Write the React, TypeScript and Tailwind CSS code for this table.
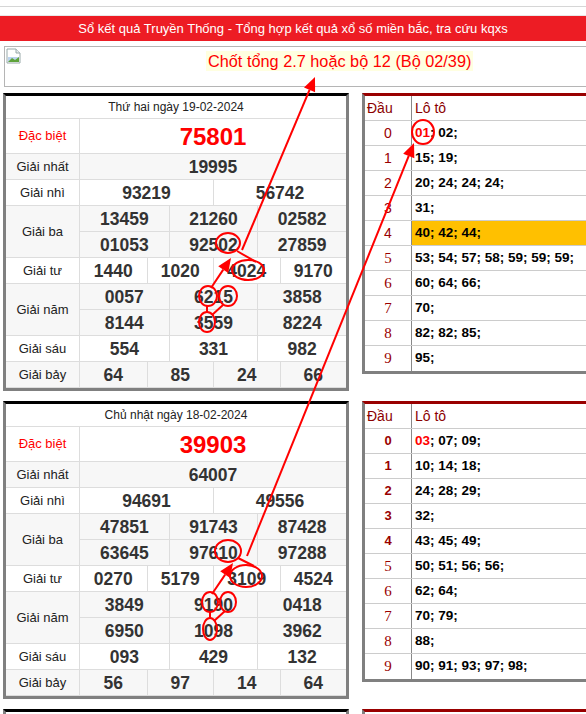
import React from "react";

type Prize = { label: string; lines: string[][]; special?: boolean; shade?: boolean };

const span: Record<number, string> = {
  1: "col-span-12",
  2: "col-span-6",
  3: "col-span-4",
  4: "col-span-3",
};

const day1: Prize[] = [
  { label: "Đặc biệt", lines: [["75801"]], special: true },
  { label: "Giải nhất", lines: [["19995"]], shade: true },
  { label: "Giải nhì", lines: [["93219", "56742"]] },
  { label: "Giải ba", lines: [["13459", "21260", "02582"], ["01053", "92502", "27859"]], shade: true },
  { label: "Giải tư", lines: [["1440", "1020", "4024", "9170"]] },
  { label: "Giải năm", lines: [["0057", "6215", "3858"], ["8144", "3559", "8224"]], shade: true },
  { label: "Giải sáu", lines: [["554", "331", "982"]] },
  { label: "Giải bảy", lines: [["64", "85", "24", "66"]], shade: true },
];

const day2: Prize[] = [
  { label: "Đặc biệt", lines: [["39903"]], special: true },
  { label: "Giải nhất", lines: [["64007"]], shade: true },
  { label: "Giải nhì", lines: [["94691", "49556"]] },
  { label: "Giải ba", lines: [["47851", "91743", "87428"], ["63645", "97610", "97288"]], shade: true },
  { label: "Giải tư", lines: [["0270", "5179", "3109", "4524"]] },
  { label: "Giải năm", lines: [["3849", "9190", "0418"], ["6950", "1098", "3962"]], shade: true },
  { label: "Giải sáu", lines: [["093", "429", "132"]] },
  { label: "Giải bảy", lines: [["56", "97", "14", "64"]], shade: true },
];

const loto1 = [
  "01; 02;", "15; 19;", "20; 24; 24; 24;", "31;", "40; 42; 44;",
  "53; 54; 57; 58; 59; 59; 59;", "60; 64; 66;", "70;", "82; 82; 85;", "95;",
];
const loto2 = [
  "03; 07; 09;", "10; 14; 18;", "24; 28; 29;", "32;", "43; 45; 49;",
  "50; 51; 56; 56;", "62; 64;", "70; 79;", "88;", "90; 91; 93; 97; 98;",
];

const ResultTable = ({ title, prizes }: { title: string; prizes: Prize[] }) => (
  <div className="w-[346px] shrink-0 border-[3px] border-[#808080] border-t-black bg-white">
    <div className="h-[23px] flex items-center justify-center text-[12px] text-[#222] border-b border-[#ddd]">
      {title}
    </div>
    {prizes.map((p) => (
      <div key={p.label} className={`flex border-b border-[#ddd] ${p.shade ? "bg-[#f7f7f7]" : "bg-white"}`}>
        <div
          className={`w-[74px] shrink-0 flex items-center justify-center border-r border-[#ddd] text-[13px] ${
            p.special ? "text-[#ff0000]" : "text-[#222]"
          }`}
        >
          {p.label}
        </div>
        <div className="flex-1 flex flex-col">
          {p.lines.map((line, i) => {
            const last = i === p.lines.length - 1;
            return (
              <div
                key={i}
                className={`grid grid-cols-12 ${
                  p.special ? "h-[34px]" : last ? "h-[25px]" : "h-[26px] border-b border-[#ddd]"
                }`}
              >
                {line.map((n, j) => (
                  <div
                    key={j}
                    className={`${span[line.length]} flex items-center justify-center font-bold ${
                      j > 0 ? "border-l border-[#ddd]" : ""
                    } ${p.special ? "text-[24px] text-[#ff0000]" : "text-[17.5px] text-[#333]"}`}
                  >
                    {n}
                  </div>
                ))}
              </div>
            );
          })}
        </div>
      </div>
    ))}
  </div>
);

const LotoTable = ({ rows, hot, highlight, boldHead }: { rows: string[]; hot: string; highlight?: number; boldHead?: boolean }) => (
  <div className="w-[240px] shrink-0 border-[3px] border-r-0 border-[#808080] border-t-[#990000] bg-white">
    <div className="flex h-[25px] border-b border-[#ccc] text-[14px] text-[#8b0000]">
      <div className="w-[47px] pl-[2px] flex items-center border-r border-[#888]">Đầu</div>
      <div className="flex-1 pl-[3px] flex items-center">Lô tô</div>
    </div>
    {rows.map((r, i) => (
      <div key={i} className="flex h-[25px] border-b border-[#ccc] last:border-b-0">
        <div
          className={`w-[47px] flex items-center justify-center border-r border-[#888] text-[#990000] ${
            i < 5
              ? boldHead
                ? "font-bold text-[13px]"
                : "text-[14px]"
              : "font-['Liberation_Serif',serif] text-[15px]"
          }`}
        >
          {i}
        </div>
        <div
          className={`flex-1 pl-[3px] flex items-center font-bold text-[13.5px] text-black ${
            highlight === i ? "bg-[#ffc000]" : ""
          }`}
        >
          {i === 0 ? (
            <>
              <span className="text-[#ff0000]">{hot}</span>
              {r.slice(hot.length)}
            </>
          ) : (
            r
          )}
        </div>
      </div>
    ))}
  </div>
);

const BrokenImage = () => (
  <svg width="16" height="16" viewBox="0 0 16 16" className="shrink-0">
    <path d="M1 1h9l4 4v10H1z" fill="#fff" stroke="#9aa" />
    <path d="M10 1v4h4" fill="#e8ecef" stroke="#9aa" />
    <path d="M2 9h11v5H2z" fill="#bcd4ee" />
    <path d="M2 14l4-4 3 2 4-3v5z" fill="#5fa33b" />
  </svg>
);

type Pt = [number, number];

const Arrow = ({ from, tip }: { from: Pt; tip: Pt }) => {
  const dx = tip[0] - from[0];
  const dy = tip[1] - from[1];
  const len = Math.hypot(dx, dy);
  const ux = dx / len;
  const uy = dy / len;
  const hl = 14;
  const hw = 6;
  const bx = tip[0] - ux * hl;
  const by = tip[1] - uy * hl;
  const pts = `${tip[0]},${tip[1]} ${bx - uy * hw},${by + ux * hw} ${bx + uy * hw},${by - ux * hw}`;
  return (
    <g>
      <line x1={from[0]} y1={from[1]} x2={bx} y2={by} stroke="#ff0000" strokeWidth={2} />
      <polygon points={pts} fill="#ff0000" />
    </g>
  );
};

const Marks = () => (
  <svg width="586" height="714" className="absolute left-0 top-0 pointer-events-none">
    <g fill="none" stroke="#ff0000" strokeWidth={2}>
      {/* first day */}
      <ellipse cx="228" cy="243" rx="12" ry="10" />
      <ellipse cx="248" cy="270" rx="16" ry="10" />
      <ellipse cx="208" cy="296" rx="9" ry="10" />
      <ellipse cx="228" cy="296" rx="9" ry="10" />
      <ellipse cx="207" cy="322" rx="8" ry="10" />
      <line x1="237" y1="251" x2="256" y2="262" />
      <line x1="207" y1="306" x2="207" y2="312" />
      <line x1="223" y1="305" x2="212" y2="315" />
      {/* second day */}
      <ellipse cx="228" cy="551" rx="13" ry="11" />
      <ellipse cx="246" cy="576" rx="16" ry="11" />
      <ellipse cx="210" cy="602" rx="8" ry="10" />
      <ellipse cx="228" cy="602" rx="8" ry="10" />
      <ellipse cx="210" cy="629" rx="7" ry="11" />
      <line x1="238" y1="558" x2="254" y2="566" />
      <line x1="210" y1="612" x2="210" y2="618" />
      <line x1="225" y1="611" x2="214" y2="621" />
      {/* loto */}
      <ellipse cx="423" cy="132" rx="11" ry="12" />
    </g>
    <Arrow from={[211, 288]} tip={[231, 258]} />
    <Arrow from={[242, 250]} tip={[315, 77]} />
    <Arrow from={[212, 594]} tip={[233, 563]} />
    <Arrow from={[247, 556]} tip={[414, 143]} />
  </svg>
);

export default function App() {
  return (
    <div className="relative w-[586px] h-[714px] overflow-hidden bg-white font-['Liberation_Sans',Arial,sans-serif]">
      <div className="h-[7px] border-b border-[#d6d6d6]" />
      <div className="h-[8px]" />
      <div className="border-t border-[#e8e8e8] bg-[#ed1c24] h-[26px] flex items-center justify-center text-white text-[13px]">
        Sổ kết quả Truyền Thống - Tổng hợp kết quả xổ số miền bắc, tra cứu kqxs
      </div>
      <div className="ml-[4px] mt-[5px] w-[600px] h-[41px] border border-[#b5b5b5] flex items-start pl-[1px] pt-[1px]">
        <BrokenImage />
        <span className="ml-[184px] mt-[3px] px-[2px] bg-[#ffffe0] text-[#ff0000] text-[16.3px] leading-[20px]">
          Chốt tổng 2.7 hoặc bộ 12 (Bộ 02/39)
        </span>
      </div>
      <div className="mt-[6px] flex flex-col gap-[10px]">
        <div className="flex items-start pl-[3px] gap-[13px]">
          <ResultTable title="Thứ hai ngày 19-02-2024" prizes={day1} />
          <LotoTable rows={loto1} hot="01" highlight={4} />
        </div>
        <div className="flex items-start pl-[3px] gap-[13px]">
          <ResultTable title="Chủ nhật ngày 18-02-2024" prizes={day2} />
          <LotoTable rows={loto2} hot="03" boldHead />
        </div>
        <div className="flex items-start pl-[3px] gap-[13px]">
          <div className="w-[346px] shrink-0 h-[12px] border-x-[3px] border-t-[3px] border-[#808080] border-t-black" />
          <div className="w-[240px] shrink-0 h-[12px] border-l-[3px] border-t-[3px] border-[#808080] border-t-[#990000]" />
        </div>
      </div>
      <Marks />
    </div>
  );
}
